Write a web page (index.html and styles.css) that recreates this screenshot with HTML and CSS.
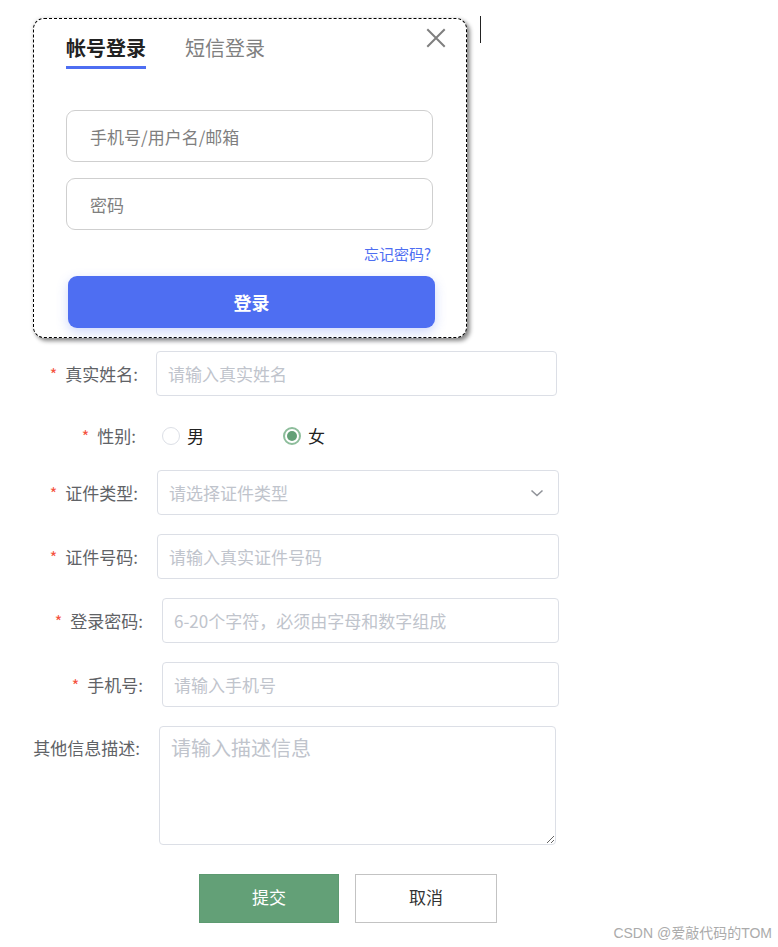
FILE: index.html
```html
<!DOCTYPE html>
<html lang="zh-CN">
<head>
<meta charset="utf-8">
<title>登录</title>
<link rel="stylesheet" href="styles.css">
</head>
<body>
<div class="page">
  <span class="caret"></span>

  <div class="login-card">
    <div class="tabs">
      <span class="tab tab-active">帐号登录</span>
      <span class="tab">短信登录</span>
      <svg class="close" width="20" height="20" viewBox="0 0 20 20" aria-hidden="true">
        <path d="M2 2 L18 18 M18 2 L2 18" stroke="#7f7f7f" stroke-width="2" fill="none" stroke-linecap="square"/>
      </svg>
    </div>
    <input class="login-input" type="text" placeholder="手机号/用户名/邮箱">
    <input class="login-input" type="password" placeholder="密码">
    <div class="forgot"><a href="#">忘记密码?</a></div>
    <button class="login-btn" type="button">登录</button>
  </div>

  <form class="form">
    <div class="row row-name">
      <label class="label"><span class="req">*</span>真实姓名:</label>
      <input class="control field" type="text" placeholder="请输入真实姓名">
    </div>

    <div class="row row-gender">
      <label class="label"><span class="req">*</span>性别:</label>
      <div class="control radios">
        <span class="radio"><span class="dot"></span><span class="radio-text">男</span></span>
        <span class="radio radio-checked"><span class="dot"></span><span class="radio-text">女</span></span>
      </div>
    </div>

    <div class="row row-mid">
      <label class="label"><span class="req">*</span>证件类型:</label>
      <div class="control field select">
        <span class="select-ph">请选择证件类型</span>
        <svg width="14" height="10" viewBox="0 0 14 10" aria-hidden="true">
          <path d="M1.5 2.5 L7 7.5 L12.5 2.5" stroke="#909399" stroke-width="1.6" fill="none"/>
        </svg>
      </div>
    </div>

    <div class="row row-mid">
      <label class="label"><span class="req">*</span>证件号码:</label>
      <input class="control field" type="text" placeholder="请输入真实证件号码">
    </div>

    <div class="row row-wide">
      <label class="label"><span class="req">*</span>登录密码:</label>
      <input class="control field" type="text" placeholder="6-20个字符，必须由字母和数字组成">
    </div>

    <div class="row row-wide">
      <label class="label"><span class="req">*</span>手机号:</label>
      <input class="control field" type="text" placeholder="请输入手机号">
    </div>

    <div class="row row-text">
      <label class="label">其他信息描述:</label>
      <textarea class="control area" placeholder="请输入描述信息"></textarea>
    </div>

    <div class="actions">
      <button class="btn btn-submit" type="button">提交</button>
      <button class="btn btn-cancel" type="button">取消</button>
    </div>
  </form>

  <div class="watermark">CSDN @爱敲代码的TOM</div>
</div>
</body>
</html>
```

FILE: styles.css
```css
* { box-sizing: border-box; }

html, body {
  margin: 0;
  padding: 0;
  background: #fff;
}

body {
  font-family: "Noto Sans CJK SC", "Liberation Sans", sans-serif;
  color: #333;
}

.page {
  position: relative;
  width: 778px;
  height: 947px;
  overflow: hidden;
  padding-top: 18px;
}

.caret {
  position: absolute;
  left: 480px;
  top: 16px;
  width: 1px;
  height: 27px;
  background: #222;
}

/* ---------- login card ---------- */
.login-card {
  margin-left: 33px;
  width: 434px;
  height: 320px;
  border: 1px dashed #000;
  border-radius: 11px;
  background: #fff;
  box-shadow: 3px 3px 4px rgba(0, 0, 0, 0.45), 0 0 4px rgba(0, 0, 0, 0.12);
  padding: 15px 0 0 32px;
  display: flex;
  flex-direction: column;
}

.tabs {
  display: flex;
  align-items: flex-start;
  gap: 39px;
  height: 76px;
  position: relative;
}

.tab {
  font-size: 20px;
  line-height: 28px;
  color: #808080;
  padding-bottom: 4px;
  border-bottom: 3px solid transparent;
}

.tab-active {
  color: #222;
  font-weight: 700;
  border-bottom-color: #4e6ef2;
}

.close {
  position: absolute;
  right: 20px;
  top: -6px;
}

.login-input {
  display: block;
  width: 367px;
  height: 52px;
  border: 1px solid #cfcfcf;
  border-radius: 9px;
  padding: 0 23px;
  font-family: inherit;
  font-size: 17px;
  color: #333;
  outline: none;
  margin-bottom: 16px;
}

.login-input::placeholder { color: #7f7f7f; }

.forgot {
  width: 365px;
  text-align: right;
  font-size: 15px;
  line-height: 20px;
  margin-top: -2px;
}

.forgot a {
  color: #4e6ef2;
  text-decoration: none;
}

.login-btn {
  margin-top: 12px;
  margin-left: 2px;
  width: 367px;
  height: 52px;
  border: none;
  border-radius: 9px;
  background: #4e6ef2;
  color: #fff;
  font-family: inherit;
  font-size: 18px;
  font-weight: 700;
  box-shadow: 0 4px 12px rgba(78, 110, 242, 0.28);
}

/* ---------- form ---------- */
.form {
  margin-top: 13px;
}

.row {
  display: flex;
  align-items: center;
  margin-bottom: 19px;
}

.label {
  flex-shrink: 0;
  text-align: right;
  font-size: 17px;
  line-height: 22px;
  color: #606266;
  white-space: nowrap;
}

.req {
  color: #f5533d;
  margin-right: 8px;
  font-size: 16px;
}

.control { flex: 1; }

.field {
  height: 45px;
  border: 1px solid #dcdfe6;
  border-radius: 4px;
  padding: 0 11px;
  font-family: inherit;
  font-size: 17px;
  color: #606266;
  outline: none;
  background: #fff;
}

.field::placeholder { color: #c0c4cc; }

.row-name { width: 557px; }
.row-name .label { width: 138px; }
.row-name .control { margin-left: 18px; }

.row-gender {
  width: 559px;
  height: 36px;
  margin-top: 22px;
  margin-bottom: 16px;
}
.row-gender .label { width: 136px; }
.row-gender .control { margin-left: 26px; }

.row-mid { width: 559px; }
.row-mid .label { width: 138px; }
.row-mid .control { margin-left: 19px; }

.row-wide { width: 559px; }
.row-wide .label { width: 143px; }
.row-wide .control { margin-left: 19px; }

.row-text {
  width: 556px;
  align-items: flex-start;
}
.row-text .label { width: 140px; padding-top: 11px; }
.row-text .control { margin-left: 19px; }

.radios {
  display: flex;
  align-items: center;
}

.radio {
  display: inline-flex;
  align-items: center;
  width: 121px;
}

.dot {
  width: 18px;
  height: 18px;
  border: 1px solid #dcdfe6;
  border-radius: 50%;
  background: #fff;
  display: inline-block;
  position: relative;
}

.radio-checked .dot {
  border: 2px solid #8dbd9b;
}

.radio-checked .dot::after {
  content: "";
  position: absolute;
  left: 2px;
  top: 2px;
  width: 10px;
  height: 10px;
  border-radius: 50%;
  background: #63a077;
}

.radio-text {
  margin-left: 7px;
  font-size: 17px;
  line-height: 22px;
  color: #222;
}

.select {
  display: flex;
  align-items: center;
  justify-content: space-between;
  padding-right: 14px;
}

.select-ph {
  color: #c0c4cc;
  font-size: 17px;
}

.area {
  height: 119px;
  border: 1px solid #dcdfe6;
  border-radius: 4px;
  padding: 7px 11px;
  font-family: inherit;
  font-size: 20px;
  line-height: 28px;
  color: #606266;
  resize: vertical;
  outline: none;
}

.area::placeholder { color: #c0c4cc; }

.actions {
  display: flex;
  gap: 16px;
  margin-top: 29px;
  margin-left: 199px;
}

.btn {
  height: 49px;
  font-family: inherit;
  font-size: 17px;
  line-height: 22px;
  padding: 0 0 3px;
  border-radius: 0;
}

.btn-submit {
  width: 140px;
  background: #63a077;
  border: 1px solid #5d9a71;
  color: #fff;
}

.btn-cancel {
  width: 142px;
  background: #fff;
  border: 1px solid #c3c3c3;
  color: #333;
}

.watermark {
  position: absolute;
  right: 6px;
  top: 924px;
  font-size: 14px;
  line-height: 18px;
  color: #ababab;
  font-family: "Liberation Sans", "Noto Sans CJK SC", sans-serif;
}
```
